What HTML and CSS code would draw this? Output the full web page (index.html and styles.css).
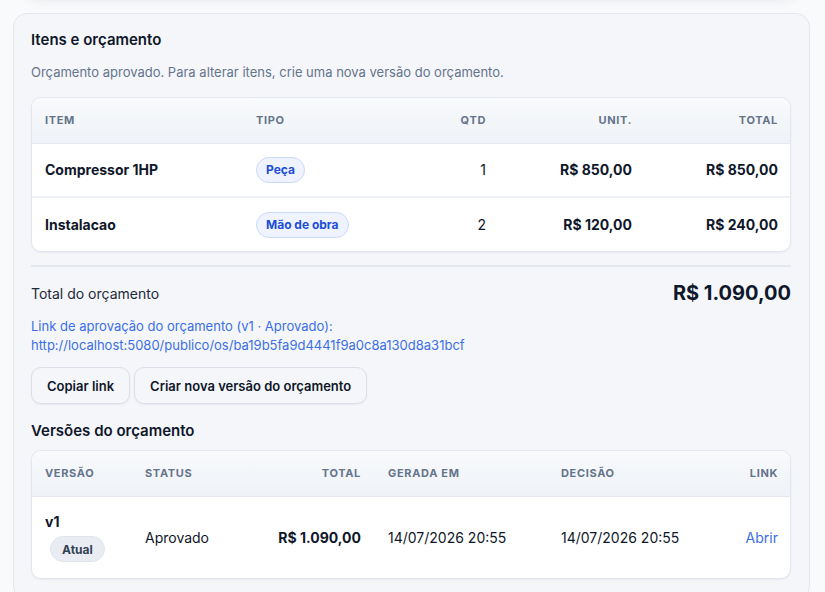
FILE: index.html
```html
<!DOCTYPE html>
<html lang="pt-BR">
<head>
<meta charset="utf-8">
<link rel="stylesheet" href="styles.css">
</head>
<body>
<div class="page">
  <div class="prev-card"></div>
  <section class="card">
    <h2 class="title">Itens e orçamento</h2>
    <p class="subtitle">Orçamento aprovado. Para alterar itens, crie uma nova versão do orçamento.</p>

    <div class="table-box">
      <table class="tbl items">
        <colgroup>
          <col class="c-item"><col class="c-tipo"><col class="c-qtd"><col class="c-unit"><col class="c-total">
        </colgroup>
        <thead>
          <tr><th>Item</th><th>Tipo</th><th class="r">Qtd</th><th class="r">Unit.</th><th class="r">Total</th></tr>
        </thead>
        <tbody>
          <tr>
            <td class="b">Compressor 1HP</td>
            <td><span class="badge">Peça</span></td>
            <td class="r">1</td>
            <td class="r b">R$ 850,00</td>
            <td class="r b">R$ 850,00</td>
          </tr>
          <tr>
            <td class="b">Instalacao</td>
            <td><span class="badge">Mão de obra</span></td>
            <td class="r">2</td>
            <td class="r b">R$ 120,00</td>
            <td class="r b">R$ 240,00</td>
          </tr>
        </tbody>
      </table>
    </div>

    <hr class="divider">

    <div class="total-row">
      <span class="total-label">Total do orçamento</span>
      <span class="total-value">R$ 1.090,00</span>
    </div>

    <p class="link-text">Link de aprovação do orçamento (v1 · Aprovado):<br>http://localhost:5080/publico/os/ba19b5fa9d4441f9a0c8a130d8a31bcf</p>

    <div class="actions">
      <button class="btn">Copiar link</button>
      <button class="btn">Criar nova versão do orçamento</button>
    </div>

    <h3 class="title sub">Versões do orçamento</h3>

    <div class="table-box">
      <table class="tbl versions">
        <colgroup>
          <col class="v-ver"><col class="v-status"><col class="v-total"><col class="v-ger"><col class="v-dec"><col class="v-link">
        </colgroup>
        <thead>
          <tr><th>Versão</th><th>Status</th><th class="r">Total</th><th>Gerada em</th><th>Decisão</th><th class="r">Link</th></tr>
        </thead>
        <tbody>
          <tr>
            <td><div class="ver">v1</div><span class="pill">Atual</span></td>
            <td>Aprovado</td>
            <td class="r b">R$ 1.090,00</td>
            <td>14/07/2026 20:55</td>
            <td>14/07/2026 20:55</td>
            <td class="r"><a class="open">Abrir</a></td>
          </tr>
        </tbody>
      </table>
    </div>
  </section>
</div>
</body>
</html>
```

FILE: styles.css
```css
* { box-sizing: border-box; }
html, body { margin: 0; padding: 0; }
body {
  background: #f9fafc;
  font-family: Inter, "Noto Sans", sans-serif;
  color: #0f172a;
  overflow: hidden;
}
.page {
  padding: 1px 15px 0 13px;
}
.prev-card {
  height: 40px;
  margin: -48px 12px 20px 12px;
  border-radius: 14px;
  background: #ffffff;
  box-shadow: 0 4px 14px rgba(15, 23, 42, 0.13);
}
.card {
  width: 797px;
  background: #f5f6fa;
  border: 1px solid #e3e6ec;
  border-radius: 14px;
  padding: 16px 18px 20px 17px;
}
.title {
  margin: 0;
  font-size: 15px;
  line-height: 20px;
  font-weight: 600;
  color: #0f172a;
}
.title.sub { margin: 17px 0 9px 0; }
.subtitle {
  margin: 13px 0 16px 0;
  font-size: 13px;
  line-height: 18px;
  color: #64748b;
}
.table-box {
  background: #fff;
  border: 1px solid #e2e6ee;
  border-radius: 10px;
  overflow: hidden;
  box-shadow: 0 1px 2px rgba(15, 23, 42, 0.05);
}
.tbl {
  width: 100%;
  border-collapse: collapse;
  table-layout: fixed;
}
.tbl th {
  height: 45px;
  padding: 0 14px 0 13px;
  text-align: left;
  font-size: 11px;
  font-weight: 700;
  letter-spacing: 0.06em;
  text-transform: uppercase;
  color: #64748b;
  background: linear-gradient(#f8fafc, #eff2f7);
  border-bottom: 1px solid #e6eaf0;
}
.tbl td {
  padding: 0 14px 0 13px;
  font-size: 14px;
  color: #0f172a;
}
.items td { height: 54px; }
.items tbody tr + tr td { border-top: 2px solid #eef1f5; }
.tbl .r { text-align: right; }
.tbl .b { font-weight: 700; }
.c-item { width: 211px; }
.c-tipo { width: 178px; }
.c-qtd { width: 79px; }
.c-unit { width: 146px; }
.c-total { width: 146px; }

.badge {
  display: inline-block;
  height: 26px;
  line-height: 24px;
  padding: 0 9px;
  border-radius: 13px;
  background: #eef3ff;
  border: 1px solid #cbdaf8;
  color: #1d4ed8;
  font-size: 12px;
  font-weight: 700;
}
.divider {
  margin: 13px 0 0 0;
  border: 0;
  border-top: 2px solid #e3e7ee;
}
.total-row {
  display: flex;
  justify-content: space-between;
  align-items: center;
  margin-top: 12px;
  height: 28px;
}
.total-label { font-size: 14px; color: #1e293b; }
.total-value { font-size: 20px; font-weight: 700; color: #0f172a; }
.link-text {
  margin: 10px 0 0 0;
  font-size: 13px;
  line-height: 19px;
  color: #3b6fe6;
}
.actions {
  display: flex;
  gap: 4px;
  margin-top: 12px;
}
.btn {
  height: 37px;
  padding: 0 15px;
  font-family: inherit;
  font-size: 13px;
  font-weight: 600;
  color: #0f172a;
  background: #f4f6f9;
  border: 1px solid #dbe0e8;
  border-radius: 10px;
  box-shadow: 0 1px 2px rgba(15, 23, 42, 0.06);
}
.versions td { height: 82px; }
.v-ver { width: 100px; }
.v-status { width: 110px; }
.v-total { width: 133px; }
.v-ger { width: 173px; }
.v-dec { width: 154px; }
.v-link { width: 90px; }
.ver { font-weight: 700; font-size: 14px; line-height: 18px; }
.pill {
  display: inline-block;
  margin: 5px 0 0 5px;
  height: 26px;
  line-height: 26px;
  padding: 0 11px;
  border-radius: 13px;
  background: #e9edf3;
  border: 1px solid #e0e5ec;
  color: #334155;
  font-size: 12px;
  font-weight: 700;
}
.open { color: #3b6fe6; font-size: 14px; cursor: pointer; }
```
